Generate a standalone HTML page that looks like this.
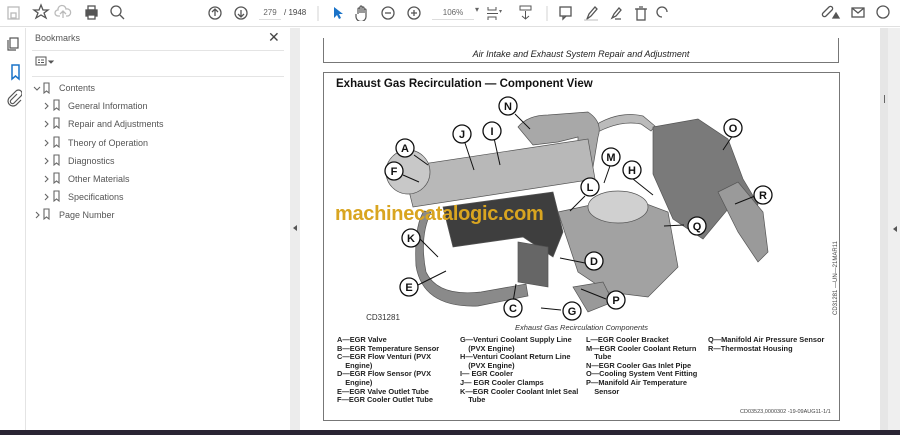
<!DOCTYPE html>
<html><head><style>
*{margin:0;padding:0;box-sizing:border-box}
body{width:900px;height:435px;overflow:hidden;background:#fff;font-family:"Liberation Sans",sans-serif;position:relative}
.tb{position:absolute;left:0;top:0;width:900px;height:27px;background:#fff;border-bottom:1px solid #e0e0e0}
.abs{position:absolute}
.bm{position:absolute;font-size:9px;color:#555}
.leg{position:absolute;font-size:7.4px;font-weight:bold;color:#222;line-height:8.6px;white-space:pre}
</style></head><body>
<div class="tb">
<svg class="abs" style="left:0;top:0" width="900" height="27" fill="none" stroke="#555" stroke-width="1.3">
<rect x="8" y="7" width="11" height="12" stroke="#bbb"/><rect x="11" y="13" width="5" height="5" stroke="#bbb"/>
<path d="M41 5l2 5h5l-4 3 2 5-5-3-5 3 2-5-4-3h5z"/>
<path d="M60 16h-2a3 3 0 0 1 0-6 4 4 0 0 1 8-1 3 3 0 0 1 2 7h-2M66 14l-3-3-3 3M63 11v7" stroke="#bbb"/>
<rect x="86" y="10" width="11" height="6" fill="#555"/><rect x="88" y="6" width="7" height="4"/><rect x="88" y="15" width="7" height="4" fill="#fff"/>
<circle cx="116" cy="11" r="5"/><path d="M120 15l4 4"/>
<circle cx="215" cy="13" r="6"/><path d="M215 16v-6M212 12l3-3 3 3"/>
<circle cx="241" cy="13" r="6"/><path d="M241 10v6M238 14l3 3 3-3"/>
<path d="M318 6v15" stroke="#ddd"/>
<circle cx="388" cy="13" r="6"/><path d="M385 13h6"/>
<circle cx="414" cy="13" r="6"/><path d="M411 13h6M414 10v6"/>
<path d="M547 6v15" stroke="#ddd"/>
<rect x="560" y="7" width="11" height="9"/><path d="M563 16v3l3-3"/>
<path d="M587 19l2-5 6-7 2 2-6 7z"/><path d="M584 20h14" stroke="#ccc"/>
<path d="M612 18l2-4 5-6 2 2-5 6zM615 19h6"/>
<rect x="637" y="9" width="8" height="11"/><path d="M635 9h12M639 7h4"/>
<path d="M662 17a5 5 0 1 1 5-5"/>
<path d="M826 16l6-6a2 2 0 0 0-3-3l-6 6a2 2 0 0 0 3 3z"/><path d="M833 18l3-5 3 5z" fill="#555"/>
<rect x="852" y="8" width="12" height="9"/><path d="M852 8l6 5 6-5"/>
<circle cx="883" cy="12" r="6"/>
</svg>
<svg class="abs" style="left:333;top:6" width="10" height="14"><path d="M1 1v11l3-3 2 4 2-1-2-4h4z" fill="#1a73c8"/></svg>
<svg class="abs" style="left:355;top:5" width="14" height="16" fill="none" stroke="#555" stroke-width="1.2"><path d="M3 9V4a1 1 0 0 1 2 0v4V2a1 1 0 0 1 2 0v6V3a1 1 0 0 1 2 0v5V5a1 1 0 0 1 2 0v6a5 5 0 0 1-10 1L1 9"/></svg>
<div class="abs" style="left:259px;top:5px;width:22px;height:15px;border-bottom:1px solid #ddd;font-size:8px;color:#666;text-align:center;line-height:15px">279</div>
<div class="abs" style="left:284px;top:5px;font-size:8px;color:#444;line-height:15px">/ 1948</div>
<div class="abs" style="left:432px;top:5px;width:42px;height:15px;border-bottom:1px solid #ddd;font-size:8px;color:#666;text-align:center;line-height:15px">106%</div>
<div class="abs" style="left:475px;top:5px;font-size:8px;color:#666">▾</div>
<svg class="abs" style="left:486;top:5" width="20" height="17" fill="none" stroke="#555"><path d="M2 2v3h8V2M2 15v-3h8v3M1 8.5h11"/><text x="13" y="8" font-size="6" fill="#666" stroke="none">▾</text></svg>
<svg class="abs" style="left:518;top:4" width="16" height="17" fill="none" stroke="#555"><rect x="2" y="2" width="11" height="4"/><path d="M7.5 7v8M4 12l3.5 3 3.5-3"/></svg>
</div>
<div class="abs" style="left:0;top:28px;width:26px;height:407px;background:#fff;border-right:1px solid #e4e4e4"></div>
<svg class="abs" style="left:4;top:34" width="18" height="80" fill="none" stroke="#555" stroke-width="1.2">
<rect x="6" y="4" width="8" height="10"/><path d="M4 6v10h8"/>
<path d="M8 31h7v14l-3.5-3-3.5 3z" stroke="#1a73c8" stroke-width="1.5"/>
<path d="M13 60l-6 6a2 2 0 0 0 3 3l7-7a3.5 3.5 0 0 0-5-5l-7 7a5 5 0 0 0 7 7l5-5"/>
</svg>
<div class="abs" style="left:26px;top:28px;width:264px;height:407px;background:#fff"></div>
<div class="bm" style="left:35px;top:33px;font-size:9px;color:#555">Bookmarks</div>
<div class="abs" style="left:268px;top:29px;font-size:14px;color:#444">✕</div>
<div class="abs" style="left:32px;top:50px;width:252px;height:1px;background:#e4e4e4"></div>
<svg class="abs" style="left:34;top:55" width="24" height="14" fill="none" stroke="#555"><rect x="2" y="2" width="10" height="8"/><path d="M4 5h2M7 5h3M4 7.5h2M7 7.5h3"/><path d="M15 6h4l-2 2z" fill="#555"/></svg>
<div class="abs" style="left:32px;top:76px;width:252px;height:1px;background:#e4e4e4"></div>
<svg class="abs" style="left:30;top:80" width="130" height="145" fill="none" stroke="#666" stroke-width="1.1">
<path d="M4 7l3 3 3-3"/><path d="M14 3h5v10l-2.5-2-2.5 2z"/>
<g id="r"><path d="M15 23l3 3-3 3"/><path d="M24 20h5v10l-2.5-2-2.5 2z"/></g>
<use href="#r" y="18"/><use href="#r" y="37"/><use href="#r" y="55"/><use href="#r" y="73"/><use href="#r" y="91"/>
<path d="M6 132l3 3-3 3"/><path d="M14 129h5v10l-2.5-2-2.5 2z"/>
</svg>
<div class="bm" style="left:59px;top:83px">Contents</div>
<div class="bm" style="left:68px;top:101px">General Information</div>
<div class="bm" style="left:68px;top:119px">Repair and Adjustments</div>
<div class="bm" style="left:68px;top:138px">Theory of Operation</div>
<div class="bm" style="left:68px;top:156px">Diagnostics</div>
<div class="bm" style="left:68px;top:174px">Other Materials</div>
<div class="bm" style="left:68px;top:192px">Specifications</div>
<div class="bm" style="left:59px;top:210px">Page Number</div>
<div class="abs" style="left:290px;top:28px;width:10px;height:407px;background:#ececec"></div>
<div class="abs" style="left:293px;top:225px;width:0;height:0;border-top:3px solid transparent;border-bottom:3px solid transparent;border-right:4px solid #555"></div>
<div class="abs" style="left:880px;top:28px;width:20px;height:407px;background:#efefef"></div>
<div class="abs" style="left:880px;top:28px;width:8px;height:407px;background:#e6e6e6"></div>
<div class="abs" style="left:884px;top:95px;width:1px;height:8px;background:#666"></div>
<div class="abs" style="left:893px;top:226px;width:0;height:0;border-top:3px solid transparent;border-bottom:3px solid transparent;border-right:4px solid #555"></div>
<div class="abs" style="left:0;top:430px;width:900px;height:5px;background:#2a2433"></div>
<div class="abs" style="left:323px;top:38px;width:516px;height:25px;border-right:1px solid #777;border-bottom:1px solid #777;border-left:1px solid #777"></div>
<div class="abs" style="left:323px;top:49px;width:516px;text-align:center;font-size:9px;font-style:italic;color:#222">Air Intake and Exhaust System Repair and Adjustment</div>
<div class="abs" style="left:323px;top:72px;width:517px;height:349px;border:1px solid #777"></div>
<div class="abs" style="left:336px;top:78px;font-size:11.5px;font-weight:bold;color:#111">Exhaust Gas Recirculation — Component View</div>
<svg class="abs" style="left:323;top:72" width="517" height="250">
<g stroke="#555" stroke-width="0.7">
<path d="M260 62q30-25 60-18l12 10-4 5-10-7q-25-5-55 15z" fill="#bbb"/>
<path d="M195 55q10-12 30-12l40 -3q15 10 10 25l-5 30-15 5 0-35-20 5-25 3z" fill="#a8a8a8"/>
<path d="M80 95l185-28 7 40-182 28z" fill="#b8b8b8"/>
<path d="M330 55l45-8 30 20 15 40 15 25-10 30-20-25-25 30-30-20-20-45z" fill="#7a7a7a"/>
<path d="M395 120l20-10 25 30 5 40-10 10-20-30z" fill="#9a9a9a"/>
<path d="M85 78a22 22 0 1 1 0 44a22 22 0 1 1 0-44z" fill="#c8c8c8"/>
<path d="M120 135l110-15 10 40-10 25-30-20-70 10z" fill="#3e3e3e"/>
<path d="M235 140l70-15 40 15 10 55-30 30-40-5-30-20z" fill="#a2a2a2"/>
<path d="M265 135a30 16 0 1 1 60 0a30 16 0 1 1-60 0z" fill="#d0d0d0"/>
<path d="M108 140q-12 25-5 60q12 25 55 20l45-8 2 12-50 10q-55 2-62-40 -2-40 8-55z" fill="#8a8a8a"/>
<path d="M195 170l30 5 0 40-30-5z" fill="#666"/>
<path d="M250 215l30-5 10 20-25 10z" fill="#999"/>
</g>
</svg>
<div class="abs" style="left:335px;top:203px;font-size:20px;font-weight:bold;color:#d9a520;letter-spacing:-0.3px">machinecatalogic.com</div>
<svg class="abs" style="left:323;top:72" width="517" height="250" font-family="Liberation Sans" font-size="11" font-weight="bold" text-anchor="middle">
<g stroke="#111" stroke-width="1" fill="none">
<path d="M192 42l15 15M141 68l10 30M171 66l6 27M91 83l14 10M80 103l16 7M288 91l-7 20M305 103l25 20M410 63l-10 15M262 124l-15 15M432 124l-20 8M361 153l-20 1M95 165l20 20M262 191l-25-5M93 214l30-15M283 227l-25-10M190 230l3-18M238 238l-20 -2"/>
</g>
<g fill="#fff" stroke="#111" stroke-width="1.3">
<circle cx="185" cy="34" r="9"/><circle cx="139" cy="62" r="9"/><circle cx="169" cy="59" r="9"/><circle cx="82" cy="76" r="9"/><circle cx="71" cy="99" r="9"/><circle cx="288" cy="85" r="9"/><circle cx="309" cy="98" r="9"/><circle cx="410" cy="56" r="9"/><circle cx="267" cy="115" r="9"/><circle cx="440" cy="123" r="9"/><circle cx="374" cy="154" r="9"/><circle cx="88" cy="166" r="9"/><circle cx="271" cy="189" r="9"/><circle cx="86" cy="215" r="9"/><circle cx="293" cy="228" r="9"/><circle cx="190" cy="236" r="9"/><circle cx="249" cy="239" r="9"/>
</g>
<g fill="#111">
<text x="185" y="38">N</text><text x="139" y="66">J</text><text x="169" y="63">I</text><text x="82" y="80">A</text><text x="71" y="103">F</text><text x="288" y="89">M</text><text x="309" y="102">H</text><text x="410" y="60">O</text><text x="267" y="119">L</text><text x="440" y="127">R</text><text x="374" y="158">Q</text><text x="88" y="170">K</text><text x="271" y="193">D</text><text x="86" y="219">E</text><text x="293" y="232">P</text><text x="190" y="240">C</text><text x="249" y="243">G</text>
</g>
<text x="60" y="248" font-size="8" font-weight="normal" fill="#333">CD31281</text>
</svg>
<div class="abs" style="left:833px;top:315px;font-size:6px;color:#444;transform:rotate(-90deg);transform-origin:0 0;white-space:nowrap">CD31281 —UN—21MAR11</div>
<div class="abs" style="left:323px;top:323px;width:517px;text-align:center;font-size:7.5px;font-style:italic;color:#333">Exhaust Gas Recirculation Components</div>
<div class="leg" style="left:337px;top:336px">A—EGR Valve
B—EGR Temperature Sensor
C—EGR Flow Venturi (PVX
    Engine)
D—EGR Flow Sensor (PVX
    Engine)
E—EGR Valve Outlet Tube
F—EGR Cooler Outlet Tube</div>
<div class="leg" style="left:460px;top:336px">G—Venturi Coolant Supply Line
    (PVX Engine)
H—Venturi Coolant Return Line
    (PVX Engine)
I— EGR Cooler
J— EGR Cooler Clamps
K—EGR Cooler Coolant Inlet Seal
    Tube</div>
<div class="leg" style="left:586px;top:336px">L—EGR Cooler Bracket
M—EGR Cooler Coolant Return
    Tube
N—EGR Cooler Gas Inlet Pipe
O—Cooling System Vent Fitting
P—Manifold Air Temperature
    Sensor</div>
<div class="leg" style="left:708px;top:336px">Q—Manifold Air Pressure Sensor
R—Thermostat Housing</div>
<div class="abs" style="left:740px;top:409px;font-size:5.5px;color:#444">CD03523,0000302 -19-09AUG11-1/1</div>
</body></html>
